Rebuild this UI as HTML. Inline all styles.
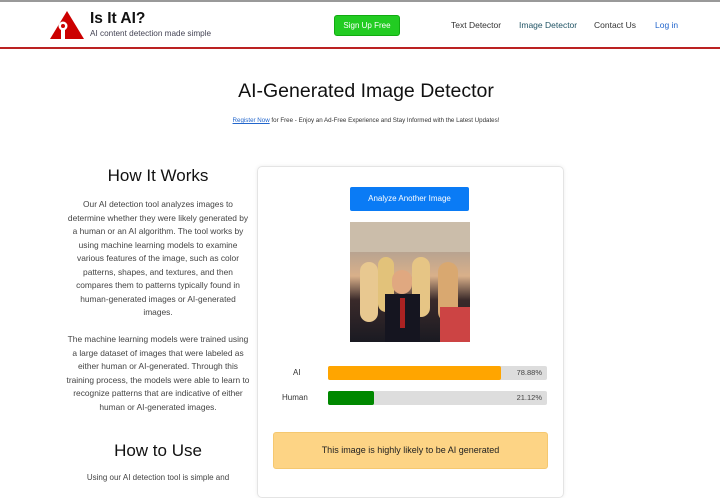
<!DOCTYPE html>
<html><head><style>
body{margin:0;width:720px;height:482px;overflow:hidden;background:#fff;font-family:"Liberation Sans",sans-serif;color:#222;position:relative}
.a{position:absolute}
</style></head><body>
<div class="a" style="left:0;top:0;width:720px;height:2px;background:#999"></div>
<div class="a" style="left:0;top:47px;width:720px;height:2px;background:#b22"></div>
<svg class="a" style="left:50px;top:11px" width="34" height="28" viewBox="0 0 34 28"><polygon points="17,0 34,28 0,28" fill="#c00"/><circle cx="13" cy="15" r="4.5" fill="#fff"/><circle cx="13" cy="15" r="2" fill="#c00"/><rect x="11" y="18" width="4" height="10" fill="#fff"/></svg>
<div class="a" style="left:90px;top:10px;font-size:15.5px;font-weight:bold;color:#111">Is It AI?</div>
<div class="a" style="left:90px;top:29px;font-size:8.2px;color:#445">AI content detection made simple</div>
<div class="a" style="left:334px;top:15px;width:64px;height:19px;background:#2c2;border-radius:3px;color:#fff;font-size:8px;text-align:center;line-height:19px;border:1px solid #1a1">Sign Up Free</div>
<div class="a" style="left:451px;top:20px;font-size:8.5px;color:#333">Text Detector</div>
<div class="a" style="left:519px;top:20px;font-size:8.5px;color:#256">Image Detector</div>
<div class="a" style="left:594px;top:20px;font-size:8.5px;color:#333">Contact Us</div>
<div class="a" style="left:655px;top:20px;font-size:8.5px;color:#26c">Log in</div>
<div class="a" style="left:0;top:80px;width:732px;text-align:center;font-size:19.5px;color:#111">AI-Generated Image Detector</div>
<div class="a" style="left:0;top:117px;width:732px;text-align:center;font-size:6.2px;color:#333"><u style="color:#26c">Register Now</u> for Free - Enjoy an Ad-Free Experience and Stay Informed with the Latest Updates!</div>
<div class="a" style="left:68px;top:166px;width:180px;text-align:center;font-size:17px;color:#111">How It Works</div>
<div class="a" style="left:66px;top:198px;width:184px;text-align:center;font-size:8.4px;line-height:13.5px;color:#444">Our AI detection tool analyzes images to determine whether they were likely generated by a human or an AI algorithm. The tool works by using machine learning models to examine various features of the image, such as color patterns, shapes, and textures, and then compares them to patterns typically found in human-generated images or AI-generated images.<br><br>The machine learning models were trained using a large dataset of images that were labeled as either human or AI-generated. Through this training process, the models were able to learn to recognize patterns that are indicative of either human or AI-generated images.</div>
<div class="a" style="left:68px;top:441px;width:180px;text-align:center;font-size:17px;color:#111">How to Use</div>
<div class="a" style="left:68px;top:473px;width:180px;text-align:center;font-size:8px;color:#444">Using our AI detection tool is simple and</div>
<div class="a" style="left:257px;top:166px;width:305px;height:330px;border:1px solid #e4e4e4;border-radius:5px;box-shadow:0 0 4px #eee"></div>
<div class="a" style="left:350px;top:187px;width:119px;height:24px;background:#0a7bf5;border-radius:2px;color:#fff;font-size:8px;text-align:center;line-height:24px">Analyze Another Image</div>
<div class="a" style="left:350px;top:222px;width:120px;height:120px;background:linear-gradient(180deg,#a89080 0%,#b8a390 25%,#d9b08a 45%,#3a2a2a 65%,#1a1a22 100%);overflow:hidden">
<div class="a" style="left:0;top:0;width:120px;height:30px;background:#cbbdaa"></div>
<div class="a" style="left:10px;top:40px;width:18px;height:60px;background:#e8c890;border-radius:9px"></div>
<div class="a" style="left:28px;top:35px;width:16px;height:55px;background:#e2c27a;border-radius:8px"></div>
<div class="a" style="left:62px;top:35px;width:18px;height:60px;background:#e6c585;border-radius:9px"></div>
<div class="a" style="left:88px;top:40px;width:20px;height:60px;background:#d9a870;border-radius:10px"></div>
<div class="a" style="left:42px;top:48px;width:20px;height:24px;background:#e0a880;border-radius:10px"></div>
<div class="a" style="left:35px;top:72px;width:35px;height:48px;background:#151520"></div>
<div class="a" style="left:50px;top:76px;width:5px;height:30px;background:#a22"></div>
<div class="a" style="left:90px;top:85px;width:30px;height:35px;background:#c44"></div>
</div>
<div class="a" style="left:293px;top:368px;font-size:8px;color:#333">AI</div>
<div class="a" style="left:282px;top:393px;font-size:8px;color:#333">Human</div>
<div class="a" style="left:328px;top:366px;width:219px;height:14px;background:#ddd;border-radius:2px"><div style="width:173px;height:14px;background:#ffa500;border-radius:2px"></div></div>
<div class="a" style="left:328px;top:366px;width:214px;font-size:7.5px;line-height:14px;text-align:right;color:#444">78.88%</div>
<div class="a" style="left:328px;top:391px;width:219px;height:14px;background:#ddd;border-radius:2px"><div style="width:46px;height:14px;background:#080;border-radius:2px"></div></div>
<div class="a" style="left:328px;top:391px;width:214px;font-size:7.5px;line-height:14px;text-align:right;color:#444">21.12%</div>
<div class="a" style="left:273px;top:432px;width:273px;height:35px;background:#fdd485;border:1px solid #f5c870;border-radius:3px;text-align:center;line-height:35px;font-size:9px;color:#222">This image is highly likely to be AI generated</div>
</body></html>
